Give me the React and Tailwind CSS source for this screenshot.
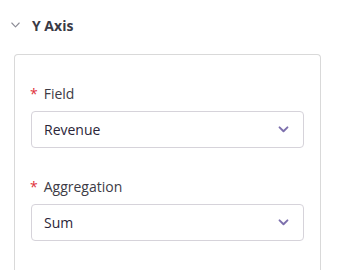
import React from "react";

function Chevron({ className }) {
  return (
    <svg className={className} viewBox="0 0 12 8" fill="none" stroke="currentColor" strokeWidth="2.2" strokeLinecap="round" strokeLinejoin="round">
      <path d="M1.5 1.5 L6 6 L10.5 1.5" />
    </svg>
  );
}

function SelectBox({ value }) {
  return (
    <div className="flex h-[37px] items-center justify-between rounded-[4px] border border-[#d6d3da] bg-white pl-[12px] pr-[14px]">
      <span className="text-[14px] text-[#2b2538]">{value}</span>
      <Chevron className="h-[7px] w-[11px] text-[#7d70ad]" />
    </div>
  );
}

function Label({ children }) {
  return (
    <div className="flex h-[20px] items-center text-[14px] text-[#3d3b45]">
      <span className="mr-[6px] -ml-[1px] text-[#e0323a]">*</span>
      {children}
    </div>
  );
}

export default function App() {
  return (
    <div className="h-[270px] w-[337px] overflow-hidden bg-white" style={{ fontFamily: '"Open Sans", "Noto Sans", sans-serif' }}>
      <div className="flex h-[50px] items-center pl-[11px]">
        <svg className="mr-[12px] h-[6px] w-[9px] text-[#8c8c96]" viewBox="0 0 9 6" fill="none" stroke="currentColor" strokeWidth="1.1" strokeLinecap="round" strokeLinejoin="round">
          <path d="M0.8 1 L4.5 4.8 L8.2 1" />
        </svg>
        <span className="text-[14px] font-bold text-[#3a3a46]">Y Axis</span>
      </div>
      <div className="ml-[14px] mt-[4px] w-[307px] h-[260px] rounded-t-[4px] border border-b-0 border-[#d9d9d9] px-[16px] pt-[28px]">
        <Label>Field</Label>
        <div className="mt-[8px]">
          <SelectBox value="Revenue" />
        </div>
        <div className="mt-[28px]">
          <Label>Aggregation</Label>
        </div>
        <div className="mt-[8px]">
          <SelectBox value="Sum" />
        </div>
      </div>
    </div>
  );
}
